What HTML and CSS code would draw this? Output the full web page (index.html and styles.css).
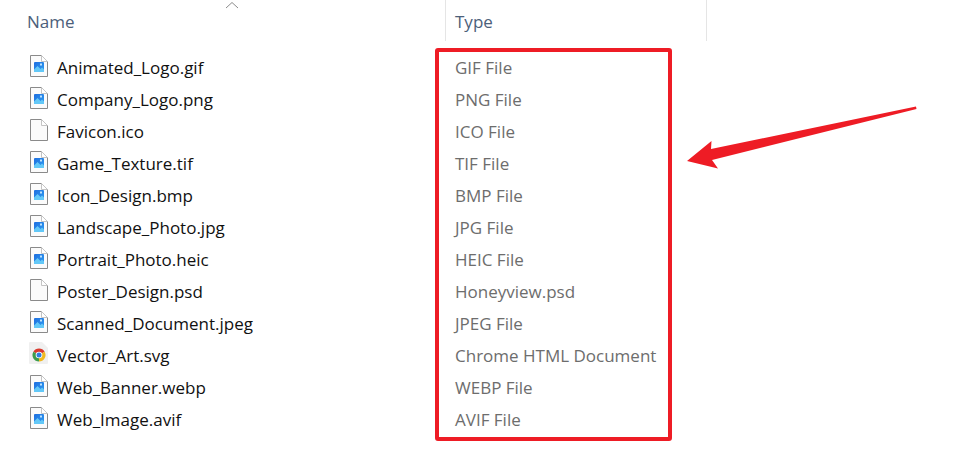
FILE: index.html
```html
<!DOCTYPE html>
<html lang="en">
<head>
    <meta charset="UTF-8">
    <meta name="viewport" content="width=device-width, initial-scale=1.0">
    <title>File list</title>
    <link rel="stylesheet" href="styles.css">
</head>
<body>

<!-- Icons used by the rows -->
<svg class="sprites" width="0" height="0">
    <defs>
        <linearGradient id="photo-sky" x1="0" y1="0" x2="1" y2="1">
            <stop offset="0" stop-color="#1f6fe0"/>
            <stop offset="1" stop-color="#2f9cf0"/>
        </linearGradient>
    </defs>
    <symbol id="blank-file" viewBox="0 0 18 22">
        <path d="M0.500 0.500H11.500L17.500 6.500V21.500H0.500Z" fill="#fbfbfb" stroke="#8a8a8a"/>
        <path d="M11.500 0.500V6.500H17.500" fill="#fff" stroke="#c4c4c4"/>
    </symbol>
    <symbol id="image-file" viewBox="0 0 18 22">
        <path d="M0.500 0.500H11.500L17.500 6.500V21.500H0.500Z" fill="#fbfbfb" stroke="#8a8a8a"/>
        <path d="M11.500 0.500V6.500H17.500" fill="#fff" stroke="#c4c4c4"/>
        <rect x="4" y="7" width="10" height="10" rx="1" fill="url(#photo-sky)"/>
        <path d="M4 17V14.500L7.500 11L10.500 14L12 12.500L14 14.500V17Z" fill="#63c8f7"/>
        <rect x="10" y="8.500" width="2" height="2" fill="#bfe4fb"/>
    </symbol>
    <symbol id="chrome-file" viewBox="0 0 18 22" class="overflowing">
        <path d="M-1 0A1 1 0 0 1 0 -1H12L18 5V20A1 1 0 0 1 17 21H0A1 1 0 0 1 -1 20Z" fill="#f0f0f0"/>
        <path d="M9 12L3.370 8.750A6.500 6.500 0 0 1 14.630 8.750Z" fill="#d93a2e"/>
        <path d="M9 12L14.630 8.750A6.500 6.500 0 0 1 9 18.500Z" fill="#f0b91f"/>
        <path d="M9 12L9 18.500A6.500 6.500 0 0 1 3.370 8.750Z" fill="#3d9c4c"/>
        <circle cx="9" cy="12" r="3.300" fill="#fff"/>
        <circle cx="9" cy="12" r="2.500" fill="#2f7fe0"/>
    </symbol>
</svg>

<div class="explorer">
    <div class="header">
        <div class="col-name">Name</div>
        <div class="col-type">Type</div>
        <div class="col-rest"></div>
        <svg class="sort-caret" width="14" height="8" viewBox="0 0 14 8">
            <path d="M1 7L7 1.500L13 7" fill="none" stroke="#8c8c8c"/>
        </svg>
    </div>

    <div class="rows">
        <div class="row"><div class="file"><svg class="icon"><use href="#image-file"/></svg>Animated_Logo.gif</div><div class="kind">GIF File</div></div>
        <div class="row"><div class="file"><svg class="icon"><use href="#image-file"/></svg>Company_Logo.png</div><div class="kind">PNG File</div></div>
        <div class="row"><div class="file"><svg class="icon"><use href="#blank-file"/></svg>Favicon.ico</div><div class="kind">ICO File</div></div>
        <div class="row"><div class="file"><svg class="icon"><use href="#image-file"/></svg>Game_Texture.tif</div><div class="kind">TIF File</div></div>
        <div class="row"><div class="file"><svg class="icon"><use href="#image-file"/></svg>Icon_Design.bmp</div><div class="kind">BMP File</div></div>
        <div class="row"><div class="file"><svg class="icon"><use href="#image-file"/></svg>Landscape_Photo.jpg</div><div class="kind">JPG File</div></div>
        <div class="row"><div class="file"><svg class="icon"><use href="#image-file"/></svg>Portrait_Photo.heic</div><div class="kind">HEIC File</div></div>
        <div class="row"><div class="file"><svg class="icon"><use href="#blank-file"/></svg>Poster_Design.psd</div><div class="kind">Honeyview.psd</div></div>
        <div class="row"><div class="file"><svg class="icon"><use href="#image-file"/></svg>Scanned_Document.jpeg</div><div class="kind">JPEG File</div></div>
        <div class="row"><div class="file"><svg class="icon"><use href="#chrome-file"/></svg>Vector_Art.svg</div><div class="kind">Chrome HTML Document</div></div>
        <div class="row"><div class="file"><svg class="icon"><use href="#image-file"/></svg>Web_Banner.webp</div><div class="kind">WEBP File</div></div>
        <div class="row"><div class="file"><svg class="icon"><use href="#image-file"/></svg>Web_Image.avif</div><div class="kind">AVIF File</div></div>
    </div>

    <!-- Annotation drawn over the list -->
    <div class="highlight"></div>
    <svg class="arrow" width="240" height="70" viewBox="0 0 240 70">
        <path d="M236.500 9L236 6.500L31 49L31.500 41L7 61L38 68.500L32 60Z" fill="#ee1c25"/>
    </svg>
</div>

</body>
</html>
```

FILE: styles.css
```css
body {
    font-family: "Open Sans", "Noto Sans", sans-serif;
    font-size: 17px;
    margin: 0;
    padding: 0;
    background-color: #fff;
    height: 453px;
    overflow: hidden;
}

.sprites {
    display: block;
}

.overflowing {
    overflow: visible;
}

.explorer {
    position: relative;
    height: 100%;
}

.header {
    display: flex;
    height: 41px;
    color: #4c607a;
    line-height: 43px;
}

.col-name {
    width: 418px;
    padding-left: 27px;
}

.col-type {
    width: 251px;
    padding-left: 9px;
    border-left: 1px solid #e5e5e5;
}

.col-rest {
    border-left: 1px solid #e5e5e5;
}

.sort-caret {
    position: absolute;
    left: 225px;
    top: 1px;
}

.rows {
    padding-top: 10px;
}

.row {
    display: flex;
    height: 32px;
    align-items: center;
}

.file {
    display: flex;
    align-items: center;
    width: 428px;
    padding-left: 30px;
    color: #111;
    box-sizing: border-box;
}

.icon {
    width: 18px;
    height: 22px;
    margin-right: 9px;
    margin-bottom: 2px;
    overflow: visible;
}

.kind {
    padding-left: 27px;
    color: #6d6d6d;
}

.highlight {
    position: absolute;
    left: 435px;
    top: 48px;
    width: 229px;
    height: 385px;
    border: 4px solid #ee1c25;
    border-radius: 3px;
}

.arrow {
    position: absolute;
    left: 680px;
    top: 100px;
}
```
